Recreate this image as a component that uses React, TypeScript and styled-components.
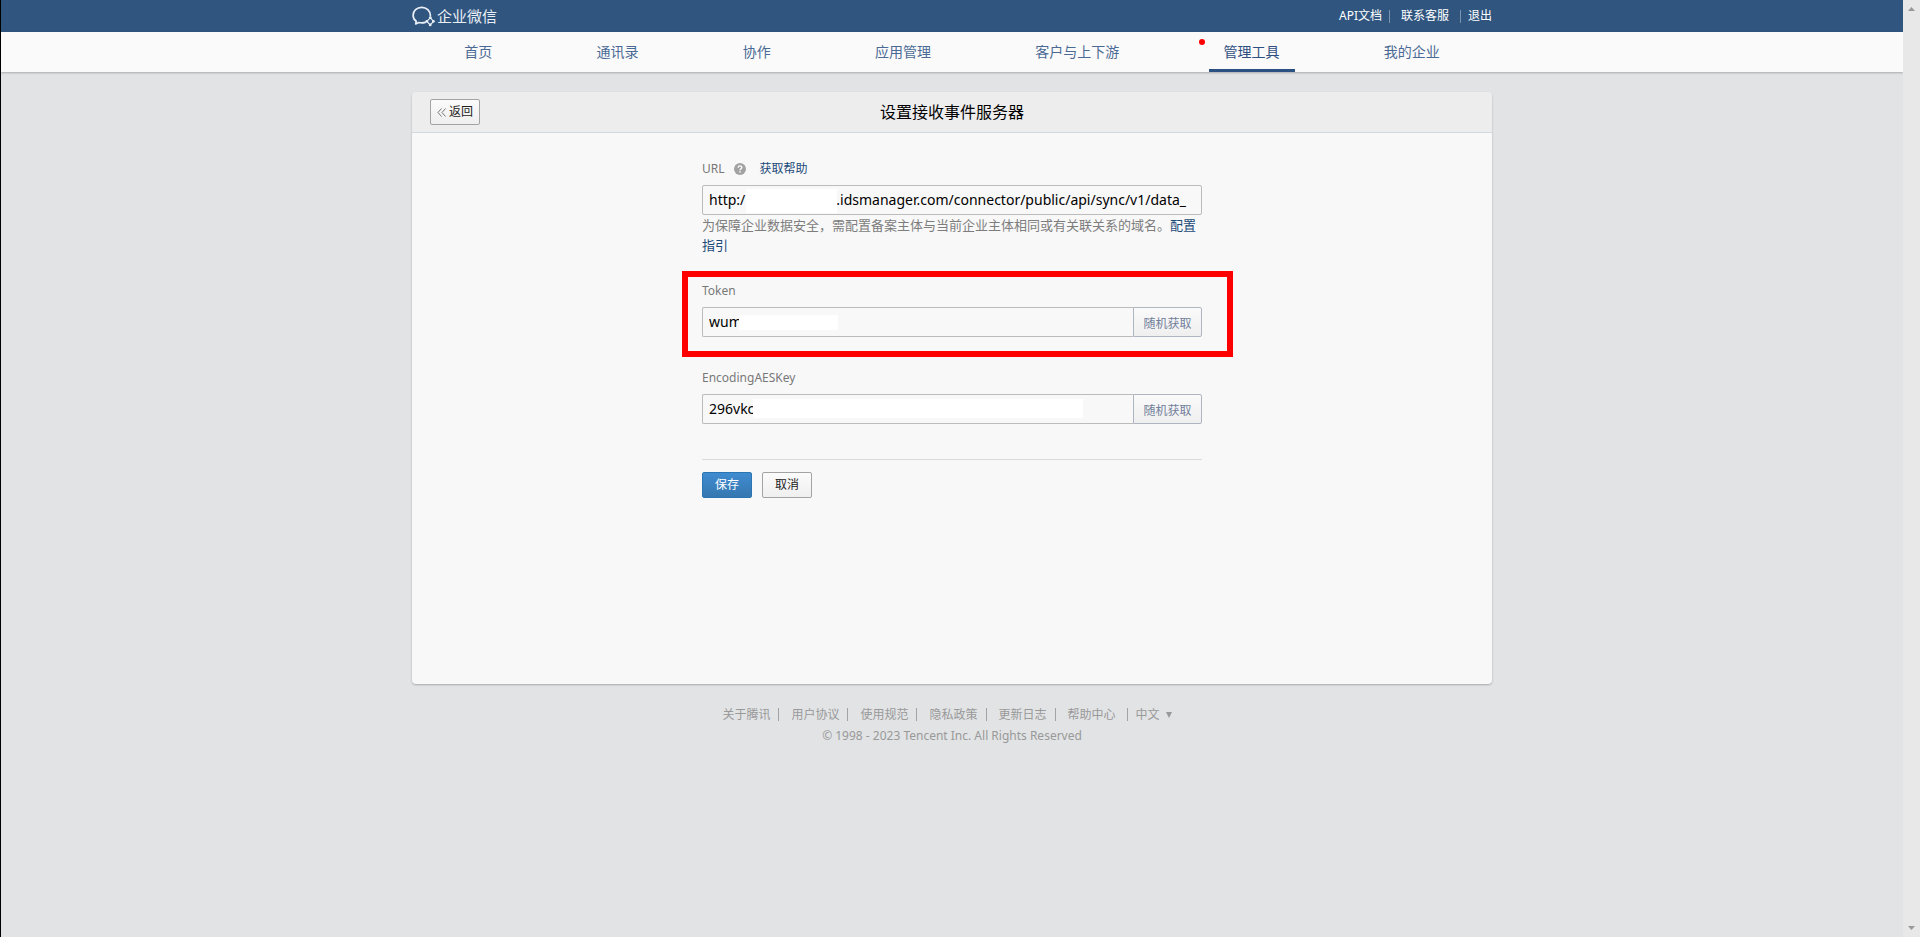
import React from "react";
import styled, { createGlobalStyle } from "styled-components";

const GlobalStyle = createGlobalStyle`
  *, *::before, *::after { box-sizing: border-box; }
  body {
    margin: 0;
    background: #e1e3e5;
    font-family: "Noto Sans", "Noto Sans CJK SC", sans-serif;
    font-size: 12px;
    line-height: 20px;
    color: #000;
  }
  button, input { font-family: inherit; margin: 0; }
  a { text-decoration: none; color: inherit; }
`;

const Page = styled.div`
  display: flex;
  min-height: 100vh;
  border-left: 1px solid #000;
`;

const Content = styled.div`
  flex: 1;
  min-width: 0;
`;

const ScrollTrack = styled.div`
  display: flex;
  flex-direction: column;
  justify-content: space-between;
  align-items: center;
  width: 17px;
  padding: 7px 0;
  position: relative;
  background: #e8e8e8;
  svg { display: block; }
`;

const Container = styled.div`
  width: 100%;
  max-width: 1080px;
  margin: 0 auto;
`;

const TopBar = styled.header`
  background: #30557f;
  color: #fff;
`;

const TopBarInner = styled(Container)`
  display: flex;
  align-items: center;
  justify-content: space-between;
  height: 32px;
`;

const Logo = styled.a`
  display: flex;
  align-items: center;
  gap: 2px;
  font-size: 15px;
  color: #e9eff6;
`;

const TopLinks = styled.div`
  display: flex;
  align-items: center;
`;

const TopDivider = styled.span<{ $left: number; $right: number }>`
  width: 1px;
  height: 13px;
  margin: 0 ${(p) => p.$right}px 0 ${(p) => p.$left}px;
  background: #7c93ae;
`;

const Nav = styled.nav`
  position: relative;
  background: #fafafa;
  box-shadow: 0 1px 2px rgba(0, 0, 0, 0.25);
`;

const NavList = styled(Container)`
  display: flex;
  justify-content: space-around;
  height: 40px;
`;

const NavLink = styled.a<{ $active?: boolean }>`
  position: relative;
  padding: 0 15px;
  border-bottom: 3px solid ${(p) => (p.$active ? "#2d5083" : "transparent")};
  font-size: 14px;
  line-height: 40px;
  color: ${(p) => (p.$active ? "#2e4f80" : "#4a6a95")};
`;

const Dot = styled.span`
  position: absolute;
  top: 7px;
  left: -10px;
  width: 6px;
  height: 6px;
  border-radius: 50%;
  background: #f00;
`;

const Card = styled(Container).attrs({ as: "main" })`
  margin-top: 20px;
  border-radius: 4px;
  background: #f8f8f8;
  box-shadow: 0 1px 2px rgba(0, 0, 0, 0.25);
`;

const CardHeader = styled.div`
  display: grid;
  grid-template-columns: 1fr auto 1fr;
  align-items: center;
  height: 41px;
  padding: 0 18px;
  border-bottom: 1px solid #d0d9df;
  border-radius: 4px 4px 0 0;
  background: #ededed;
`;

const CardTitle = styled.h1`
  margin: 0;
  font-size: 16px;
  font-weight: 400;
`;

const CardBody = styled.div`
  min-height: 551px;
  padding: 26px 20px;
`;

const Button = styled.button<{ $primary?: boolean }>`
  display: inline-flex;
  align-items: center;
  justify-content: center;
  gap: 3px;
  width: 50px;
  height: 26px;
  padding: 0;
  border: 1px solid ${(p) => (p.$primary ? "#2a75b3" : "#a3a3a3")};
  border-radius: 2px;
  background: ${(p) =>
    p.$primary
      ? "linear-gradient(#408bd0, #3578b0)"
      : "linear-gradient(#fbfbfb, #efefef)"};
  font-size: 12px;
  line-height: 20px;
  color: ${(p) => (p.$primary ? "#fff" : "#222")};
`;

const Form = styled.form`
  width: 100%;
  max-width: 500px;
  margin: 0 auto;
`;

const Field = styled.div<{ $gap: number }>`
  position: relative;
  margin-bottom: ${(p) => p.$gap}px;
`;

const LabelRow = styled.div`
  display: flex;
  align-items: center;
  margin-bottom: 6px;
  color: #787878;
`;

const HelpIcon = styled.svg`
  display: block;
  margin: 0 14px 0 9px;
`;

const Link = styled.a`
  color: #1b4a78;
`;

const InputRow = styled.div`
  position: relative;
  display: flex;
  height: 30px;
`;

const TextInput = styled.input<{ $joined?: boolean }>`
  flex: 1;
  min-width: 0;
  padding: 0 6px 1px;
  border: 1px solid #bcbcbc;
  border-right-width: ${(p) => (p.$joined ? 0 : 1)}px;
  border-radius: ${(p) => (p.$joined ? "2px 0 0 2px" : "2px")};
  outline: none;
  background: #f8f8f8;
  font-size: 14px;
  line-height: 20px;
  color: #000;
`;

const RandomButton = styled.button`
  width: 69px;
  padding: 2px 0 0;
  border: 1px solid #aeb6c2;
  border-radius: 0 2px 2px 0;
  background: linear-gradient(#fafafa, #efefef);
  font-size: 12px;
  color: #72809a;
`;

const Mask = styled.span<{ $left: number; $top: number; $width: number; $height: number }>`
  position: absolute;
  left: ${(p) => p.$left}px;
  top: ${(p) => p.$top}px;
  width: ${(p) => p.$width}px;
  height: ${(p) => p.$height}px;
  background: #fff;
`;

const Highlight = styled.span`
  position: absolute;
  inset: -10px -31px -20px -20px;
  border: 6px solid #f00;
  pointer-events: none;
`;

const Note = styled.p`
  margin: 0;
  font-size: 13px;
  color: #7d7d7d;
`;

const Actions = styled.div`
  display: flex;
  gap: 10px;
  padding-top: 12px;
  border-top: 1px solid #dadada;
`;

const Footer = styled.footer`
  margin-top: 20px;
  line-height: 21px;
  text-align: center;
  color: #999;
`;

const FooterLinks = styled.div`
  display: flex;
  justify-content: center;
  padding-right: 10px;
`;

const FooterItem = styled.span`
  display: flex;
  align-items: center;
  &::after {
    content: "";
    width: 1px;
    height: 13px;
    margin: 0 12px 0 8px;
    background: #a3a3a3;
  }
  &:last-of-type::after { margin: 0 8px 0 11px; }
`;

const LanguageButton = styled.button`
  display: flex;
  align-items: center;
  gap: 6px;
  padding: 0;
  border: 0;
  background: none;
  font-size: 12px;
  line-height: 21px;
  color: #999;
`;

const navItems = ["首页", "通讯录", "协作", "应用管理", "客户与上下游", "管理工具", "我的企业"];
const footerItems = ["关于腾讯", "用户协议", "使用规范", "隐私政策", "更新日志", "帮助中心"];
const urlValue =
  "http:/" + "\u00a0".repeat(25) + ".idsmanager.com/connector/public/api/sync/v1/data_";

export default function App() {
  return (
    <>
      <GlobalStyle />
      <Page>
        <Content>
          <TopBar>
            <TopBarInner>
              <Logo href="#">
                <svg width="23" height="22" viewBox="0 0 23 22" fill="none" stroke="#e9eff6">
                  <path
                    d="M18.4 10.6C18.2 6 14.6 2.3 9.8 2.3C4.7 2.3 1.1 5.8 1.1 10.2C1.1 12.9 2.2 15 4.2 16.3L3.7 19L6.7 17.5C9 18.1 11.2 18.1 13.2 17.4"
                    strokeWidth="1.7"
                    strokeLinejoin="round"
                    strokeLinecap="round"
                  />
                  <path
                    d="M18.3 12.8L21.6 16.3L18.2 19.9L14.8 16.3Z"
                    strokeWidth="1.2"
                    strokeLinejoin="round"
                  />
                  <g fill="#e9eff6" stroke="none">
                    <circle cx="18.3" cy="12.7" r="1.4" />
                    <circle cx="21.4" cy="16.3" r="1.4" />
                    <circle cx="18.2" cy="19.9" r="1.4" />
                    <circle cx="14.8" cy="16.3" r="1.4" />
                  </g>
                </svg>
                企业微信
              </Logo>
              <TopLinks>
                <a href="#">API文档</a>
                <TopDivider $left={7} $right={11} />
                <a href="#">联系客服</a>
                <TopDivider $left={11} $right={7} />
                <a href="#">退出</a>
              </TopLinks>
            </TopBarInner>
          </TopBar>

          <Nav>
            <NavList>
              {navItems.map((item) => (
                <NavLink key={item} href="#" $active={item === "管理工具"}>
                  {item === "管理工具" && <Dot />}
                  {item}
                </NavLink>
              ))}
            </NavList>
          </Nav>

          <Card>
            <CardHeader>
              <div>
                <Button type="button">
                  <svg width="9" height="9" viewBox="0 0 9 9" fill="none" stroke="#777">
                    <path d="M4.5 .5L1 4.5L4.5 8.5M8.5 .5L5 4.5L8.5 8.5" />
                  </svg>
                  返回
                </Button>
              </div>
              <CardTitle>设置接收事件服务器</CardTitle>
            </CardHeader>
            <CardBody>
              <Form onSubmit={(e) => e.preventDefault()}>
                <Field $gap={26}>
                  <LabelRow>
                    <label htmlFor="url">URL</label>
                    <HelpIcon width="12" height="12" viewBox="0 0 12 12">
                      <circle cx="6" cy="6" r="6" fill="#a2a2a2" />
                      <path
                        d="M4.2 4.7C4.2 2.4 7.8 2.4 7.8 4.6C7.8 5.8 6 5.8 6 7.2"
                        fill="none"
                        stroke="#fff"
                        strokeWidth="1.3"
                      />
                      <rect x="5.3" y="8.1" width="1.4" height="1.4" fill="#fff" />
                    </HelpIcon>
                    <Link href="#">获取帮助</Link>
                  </LabelRow>
                  <InputRow>
                    <TextInput id="url" type="text" defaultValue={urlValue} />
                    <Mask $left={44} $top={4} $width={91} $height={24} />
                  </InputRow>
                  <Note>
                    为保障企业数据安全，需配置备案主体与当前企业主体相同或有关联关系的域名。
                    <Link href="#">配置指引</Link>
                  </Note>
                </Field>

                <Field $gap={31}>
                  <LabelRow>
                    <label htmlFor="token">Token</label>
                  </LabelRow>
                  <InputRow>
                    <TextInput id="token" type="text" defaultValue="wum" $joined />
                    <RandomButton type="button">随机获取</RandomButton>
                    <Mask $left={37} $top={8} $width={99} $height={15} />
                  </InputRow>
                  <Highlight />
                </Field>

                <Field $gap={35}>
                  <LabelRow>
                    <label htmlFor="aes-key">EncodingAESKey</label>
                  </LabelRow>
                  <InputRow>
                    <TextInput id="aes-key" type="text" defaultValue="296vkc" $joined />
                    <RandomButton type="button">随机获取</RandomButton>
                    <Mask $left={51} $top={5} $width={330} $height={19} />
                  </InputRow>
                </Field>

                <Actions>
                  <Button type="submit" $primary>
                    保存
                  </Button>
                  <Button type="button">取消</Button>
                </Actions>
              </Form>
            </CardBody>
          </Card>

          <Footer>
            <FooterLinks>
              {footerItems.map((item) => (
                <FooterItem key={item}>
                  <a href="#">{item}</a>
                </FooterItem>
              ))}
              <LanguageButton type="button">
                中文
                <svg width="6" height="6" viewBox="0 0 6 6">
                  <path d="M0 0H6L3 6Z" fill="#999" />
                </svg>
              </LanguageButton>
            </FooterLinks>
            <div>© 1998 - 2023 Tencent Inc. All Rights Reserved</div>
          </Footer>
        </Content>
        <ScrollTrack>
          <svg width="7" height="4" viewBox="0 0 7 4">
            <path d="M0 4L3.5 0L7 4Z" fill="#999" />
          </svg>
          <svg width="7" height="4" viewBox="0 0 7 4">
            <path d="M0 0L3.5 4L7 0Z" fill="#999" />
          </svg>
        </ScrollTrack>
      </Page>
    </>
  );
}
